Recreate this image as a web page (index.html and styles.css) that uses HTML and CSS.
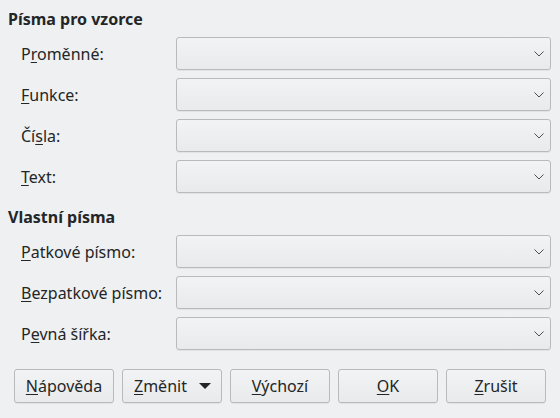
FILE: index.html
```html
<!DOCTYPE html>
<html lang="cs">
<head>
<meta charset="utf-8">
<title>Písma</title>
<link rel="stylesheet" href="styles.css">
</head>
<body>
<div class="dialog">
  <section class="group">
    <h2 class="group-title">Písma pro vzorce</h2>
    <div class="rows">
      <div class="row"><span class="label">P<u>r</u>oměnné:</span><div class="combo"><svg class="chev" viewBox="0 0 10 6" width="10" height="6"><polyline points="0.5,0.5 5,5 9.5,0.5"/></svg></div></div>
      <div class="row"><span class="label"><u>F</u>unkce:</span><div class="combo"><svg class="chev" viewBox="0 0 10 6" width="10" height="6"><polyline points="0.5,0.5 5,5 9.5,0.5"/></svg></div></div>
      <div class="row"><span class="label">Čí<u>s</u>la:</span><div class="combo"><svg class="chev" viewBox="0 0 10 6" width="10" height="6"><polyline points="0.5,0.5 5,5 9.5,0.5"/></svg></div></div>
      <div class="row"><span class="label"><u>T</u>ext:</span><div class="combo"><svg class="chev" viewBox="0 0 10 6" width="10" height="6"><polyline points="0.5,0.5 5,5 9.5,0.5"/></svg></div></div>
    </div>
  </section>
  <section class="group group-second">
    <h2 class="group-title">Vlastní písma</h2>
    <div class="rows">
      <div class="row"><span class="label"><u>P</u>atkové písmo:</span><div class="combo"><svg class="chev" viewBox="0 0 10 6" width="10" height="6"><polyline points="0.5,0.5 5,5 9.5,0.5"/></svg></div></div>
      <div class="row"><span class="label"><u>B</u>ezpatkové písmo:</span><div class="combo"><svg class="chev" viewBox="0 0 10 6" width="10" height="6"><polyline points="0.5,0.5 5,5 9.5,0.5"/></svg></div></div>
      <div class="row"><span class="label">P<u>e</u>vná šířka:</span><div class="combo"><svg class="chev" viewBox="0 0 10 6" width="10" height="6"><polyline points="0.5,0.5 5,5 9.5,0.5"/></svg></div></div>
    </div>
  </section>
  <div class="buttons">
    <button class="btn"><u>N</u>ápověda</button>
    <button class="btn btn-menu"><span><u>Z</u>měnit</span><svg class="tri" viewBox="0 0 12 6" width="12" height="6"><polygon points="0,0 12,0 6,6"/></svg></button>
    <button class="btn"><u>V</u>ýchozí</button>
    <button class="btn"><u>O</u>K</button>
    <button class="btn"><u>Z</u>rušit</button>
  </div>
</div>
</body>
</html>
```

FILE: styles.css
```css
html, body {
  margin: 0;
  padding: 0;
  background: #eff0f1;
}
body {
  width: 560px;
  height: 418px;
  overflow: hidden;
  font-family: "Noto Sans", "DejaVu Sans", sans-serif;
  color: #232627;
}
.dialog {
  padding: 9px 9px 0 8px;
}
.group-title {
  margin: 0 0 8px 0;
  height: 20px;
  line-height: 20px;
  font-size: 16px;
  font-weight: bold;
}
.group-second {
  margin-top: 14px;
}
.rows {
  display: flex;
  flex-direction: column;
  gap: 8px;
  padding-left: 13px;
}
.row {
  display: grid;
  grid-template-columns: 155px 1fr;
  align-items: center;
  height: 33px;
}
.label {
  font-size: 16px;
  line-height: 20px;
  white-space: nowrap;
}
u {
  text-decoration: underline;
  text-underline-offset: 2px;
  text-decoration-thickness: 1px;
}
.combo {
  height: 33px;
  box-sizing: border-box;
  border: 1px solid #b9babb;
  border-radius: 3px;
  background: linear-gradient(#f2f3f4, #e9eaeb);
  box-shadow: 0 1px 0 rgba(0,0,0,0.05);
  display: flex;
  align-items: center;
  justify-content: flex-end;
  padding-right: 6px;
}
.chev {
  fill: none;
  stroke: #4d4f50;
  stroke-width: 1;
}
.buttons {
  display: flex;
  gap: 8px;
  margin-top: 19px;
  padding-left: 6px;
}
.btn {
  width: 100px;
  height: 34px;
  box-sizing: border-box;
  border: 1px solid #b9babb;
  border-radius: 3px;
  background: linear-gradient(#f2f3f4, #e9eaeb);
  box-shadow: 0 1px 0 rgba(0,0,0,0.05);
  font-family: "Noto Sans", "DejaVu Sans", sans-serif;
  font-size: 16px;
  color: #232627;
  padding: 0;
  display: flex;
  align-items: center;
  justify-content: center;
}
.btn-menu {
  justify-content: space-between;
  padding: 0 10px 0 11px;
}
.tri {
  fill: #232627;
}
```
